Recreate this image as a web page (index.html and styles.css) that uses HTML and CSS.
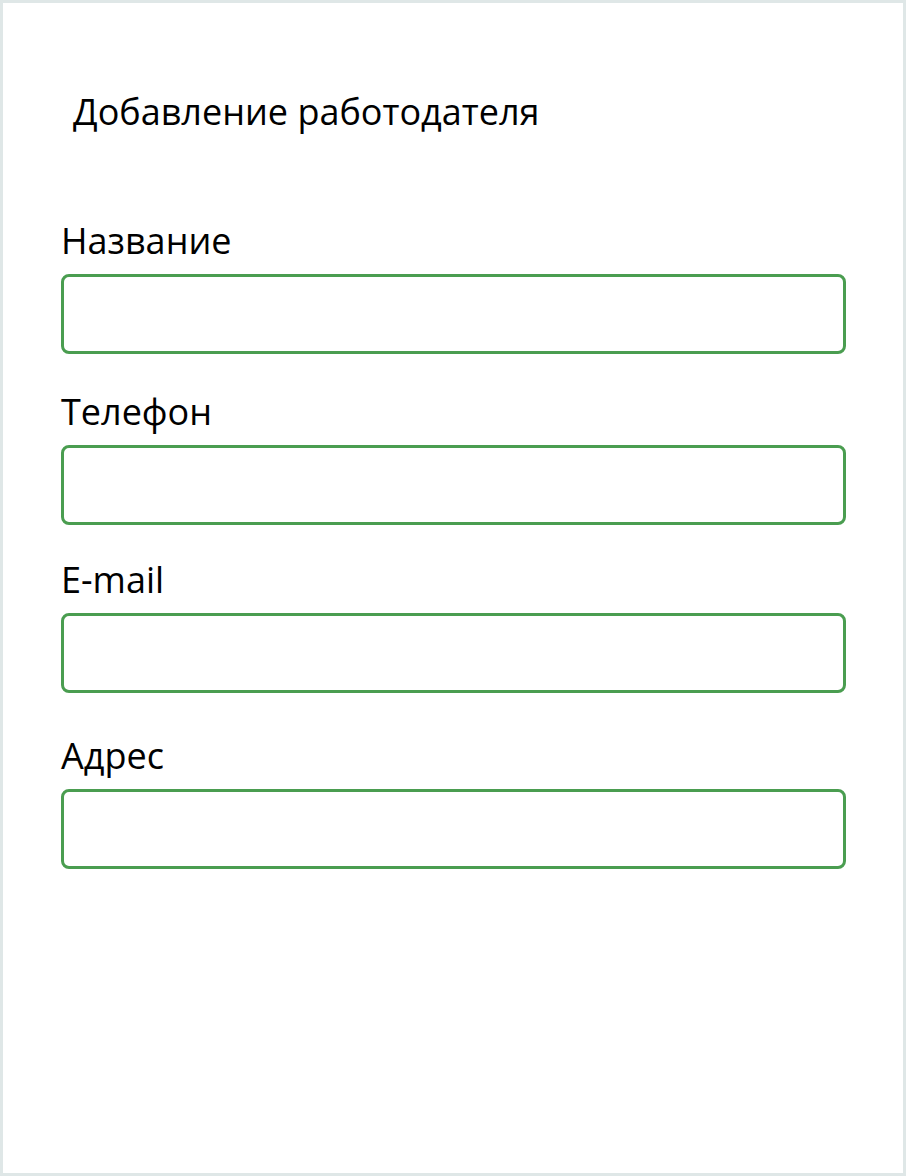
FILE: index.html
```html
<!DOCTYPE html>
<html lang="ru">
<head>
<meta charset="utf-8">
<title>Добавление работодателя</title>
<link rel="stylesheet" href="styles.css">
</head>
<body>
<div class="frame">
  <h1 class="title">Добавление работодателя</h1>
  <form class="form">
    <div class="field field-name">
      <label class="label" for="f-name">Название</label>
      <input class="input" id="f-name" type="text">
    </div>
    <div class="field field-phone">
      <label class="label" for="f-phone">Телефон</label>
      <input class="input" id="f-phone" type="text">
    </div>
    <div class="field field-email">
      <label class="label" for="f-email">E-mail</label>
      <input class="input" id="f-email" type="text">
    </div>
    <div class="field field-address">
      <label class="label" for="f-address">Адрес</label>
      <input class="input" id="f-address" type="text">
    </div>
  </form>
</div>
</body>
</html>
```
FILE: styles.css
```css
* { box-sizing: border-box; }
html, body { margin: 0; padding: 0; background: #ffffff; }
body { font-family: "Open Sans", "Noto Sans", sans-serif; color: #000; }
.frame {
  width: 906px;
  height: 1176px;
  border: 3px solid #dfe7e7;
  background: #ffffff;
  padding: 0 57px 0 58px;
}
.title {
  margin: 0;
  padding: 85px 0 0 12px;
  font-size: 36px;
  font-weight: 400;
  line-height: 48px;
}
.form { display: flex; flex-direction: column; }
.field { display: flex; flex-direction: column; }
.field-name { margin-top: 81px; }
.field-phone { margin-top: 34px; }
.field-email { margin-top: 31px; }
.field-address { margin-top: 39px; }
.label {
  font-size: 36px;
  line-height: 48px;
  margin-bottom: 9px;
}
.input {
  width: 785px;
  height: 80px;
  border: 3px solid #4a9d50;
  border-radius: 8px;
  background: #fff;
  font: inherit;
  outline: none;
}
```
